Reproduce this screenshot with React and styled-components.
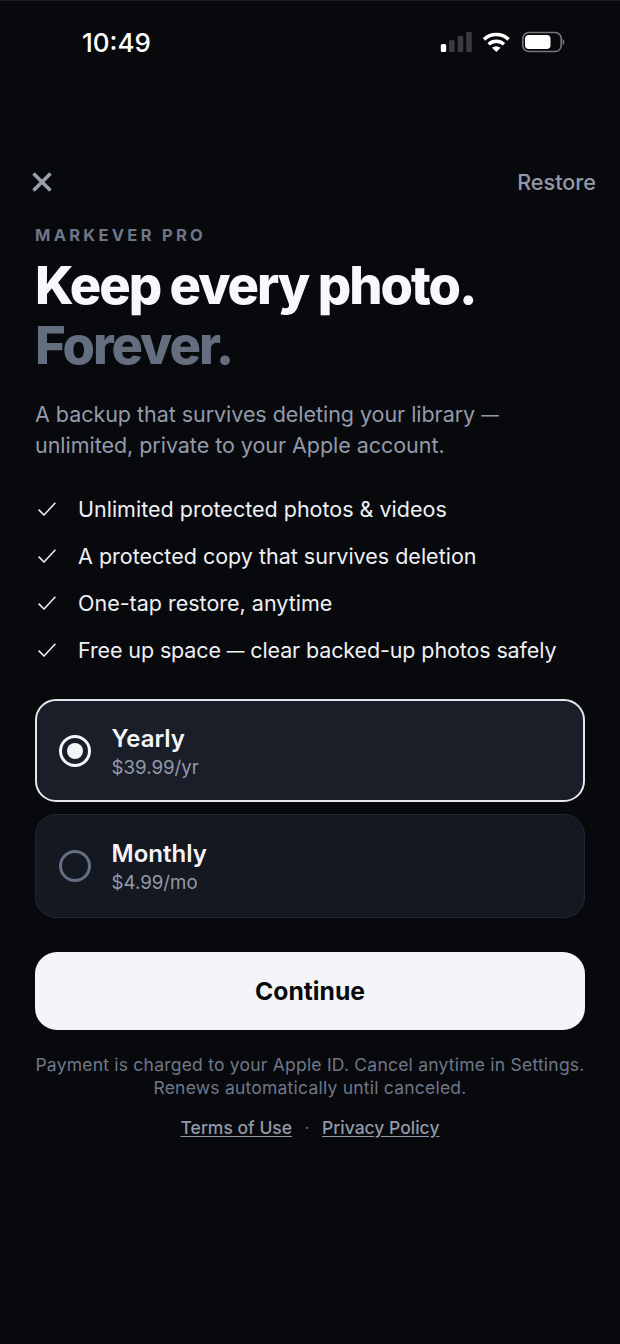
import React from "react";
import styled, { createGlobalStyle } from "styled-components";

const Global = createGlobalStyle`
  html, body { margin: 0; padding: 0; background: #08090d; }
  * { box-sizing: border-box; }
`;

const Page = styled.div`
  width: 620px;
  height: 1344px;
  overflow: hidden;
  background: #08090d;
  border-top: 1px solid #1a1c22;
  font-family: Inter, "Liberation Sans", sans-serif;
  color: #f4f5f9;
  display: flex;
  flex-direction: column;
`;

const StatusBar = styled.div`
  height: 81px;
  padding: 25px 54px 0 82px;
  display: flex;
  justify-content: space-between;
  align-items: flex-start;
`;

const Time = styled.div`
  font-size: 26px;
  line-height: 34px;
  font-weight: 500;
  color: #fff;
`;

const StatusIcons = styled.svg`
  margin-top: 3px;
  display: block;
`;

const TopBar = styled.div`
  margin-top: 78px;
  height: 44px;
  padding: 0 24px 0 31px;
  display: flex;
  justify-content: space-between;
  align-items: center;
`;

const CloseIcon = styled.svg`
  display: block;
`;

const Restore = styled.div`
  font-size: 21.6px;
  font-weight: 500;
  color: #929aa9;
`;

const Content = styled.div`
  padding: 0 35px;
  display: flex;
  flex-direction: column;
`;

const Eyebrow = styled.div`
  margin-top: 20px;
  font-size: 16.5px;
  line-height: 22px;
  font-weight: 700;
  letter-spacing: 3.27px;
  color: #6f7787;
`;

const Heading = styled.h1`
  margin: 9px 0 0;
  font-size: 52.5px;
  line-height: 60px;
  font-weight: 800;
  letter-spacing: -2.03px;
  color: ${(p) => (p.$muted ? "#656e7f" : "#f7f8fb")};
  &:last-of-type { margin-top: 0; }
`;

const Lead = styled.p`
  margin: 24px 0 0;
  font-size: 21.5px;
  line-height: 31px;
  letter-spacing: -0.04px;
  color: #939aaa;
`;

const Dash = styled.span`
  font-size: 0.82em;
  vertical-align: 0.06em;
`;

const Features = styled.ul`
  list-style: none;
  margin: 33px 0 0;
  padding: 0;
  display: flex;
  flex-direction: column;
  gap: 17px;
`;

const Feature = styled.li`
  height: 30px;
  display: flex;
  align-items: center;
  gap: 22px;
  font-size: 21.5px;
  color: #eef0f4;
`;

const FeatureText = styled.span`
  white-space: nowrap;
  letter-spacing: ${(p) => (p.$tight ? "-0.12px" : "0")};
`;

const Check = styled.svg`
  flex: none;
  display: block;
  margin-left: 3px;
`;

const Plans = styled.div`
  margin-top: 34px;
  display: flex;
  flex-direction: column;
  gap: 12px;
`;

const Plan = styled.div`
  height: ${(p) => (p.$selected ? 103 : 104)}px;
  padding: 0 ${(p) => (p.$selected ? 22 : 23)}px;
  display: flex;
  align-items: center;
  gap: 20.5px;
  border-radius: 21px;
  background: ${(p) => (p.$selected ? "#191e29" : "#141821")};
  border: ${(p) => (p.$selected ? "2px solid #e4e6eb" : "1px solid #222733")};
`;

const Radio = styled.div`
  width: 32px;
  height: 32px;
  border-radius: 50%;
  flex: none;
  display: flex;
  align-items: center;
  justify-content: center;
  border: 3px solid ${(p) => (p.$selected ? "#f4f5f9" : "#667085")};
  &::after {
    content: "";
    display: ${(p) => (p.$selected ? "block" : "none")};
    width: 16px;
    height: 16px;
    border-radius: 50%;
    background: #f4f5f9;
  }
`;

const PlanText = styled.div`
  display: flex;
  flex-direction: column;
  gap: 1px;
  padding-top: 2px;
`;

const PlanName = styled.div`
  font-size: 24px;
  line-height: 31px;
  font-weight: 600;
  color: #f4f5f9;
`;

const PlanPrice = styled.div`
  font-size: 18.7px;
  line-height: 26px;
  color: #929aa9;
`;

const ContinueButton = styled.button`
  margin-top: 34px;
  height: 78px;
  width: 100%;
  border: 0;
  border-radius: 22px;
  background: #f4f5f9;
  color: #08090d;
  font-family: inherit;
  font-size: 24.7px;
  font-weight: 700;
`;

const Legal = styled.p`
  margin: 23px 0 0;
  font-size: 17.5px;
  line-height: 23px;
  letter-spacing: 0.22px;
  text-align: center;
  color: #6f7888;
  white-space: nowrap;
`;

const Links = styled.div`
  margin-top: 17px;
  display: flex;
  justify-content: center;
  align-items: center;
  gap: 12.5px;
  font-size: 17.5px;
  line-height: 24px;
  color: #667085;
`;

const LegalLink = styled.a`
  color: #929aa9;
  font-weight: 500;
  text-decoration: underline;
  text-underline-offset: 2px;
`;

const features = [
  { id: "a", text: "Unlimited protected photos & videos" },
  { id: "b", text: "A protected copy that survives deletion" },
  { id: "c", text: "One-tap restore, anytime" },
  { id: "d", before: "Free up space ", after: " clear backed-up photos safely", tight: true },
];

const plans = [
  { name: "Yearly", price: "$39.99/yr", selected: true },
  { name: "Monthly", price: "$4.99/mo", selected: false },
];

export default function App() {
  return (
    <Page>
      <Global />
      <StatusBar>
        <Time>10:49</Time>
        <StatusIcons width="126" height="24" viewBox="0 0 126 24" fill="none">
          <rect x="0.8" y="15" width="5.4" height="8" rx="1.5" fill="#fff" />
          <rect x="9" y="11" width="5.6" height="12" rx="1.5" fill="#3a3b3f" />
          <rect x="17.7" y="6.7" width="5.6" height="16.3" rx="1.5" fill="#3a3b3f" />
          <rect x="26.2" y="2.7" width="5.6" height="20.3" rx="1.5" fill="#3a3b3f" />
          <path d="M44 10.4 A18 18 0 0 1 68.6 10.4" stroke="#fff" strokeWidth="3.5" />
          <path d="M48.6 15.2 A11.5 11.5 0 0 1 64 15.2" stroke="#fff" strokeWidth="3.5" />
          <path d="M52 18.8 L56.3 23 L60.6 18.8 A6.5 6.5 0 0 0 52 18.8 Z" fill="#fff" />
          <rect x="82.8" y="3.5" width="38.4" height="19" rx="6" stroke="#77787c" strokeWidth="1.6" />
          <rect x="85" y="6" width="25.5" height="14" rx="3.8" fill="#fff" />
          <path d="M122.6 10 C125 10.6 125 15.4 122.6 16 Z" fill="#77787c" />
        </StatusIcons>
      </StatusBar>
      <TopBar>
        <CloseIcon width="22" height="22" viewBox="0 0 22 22" fill="none">
          <path d="M2.5 2.5 L19.5 19.5 M19.5 2.5 L2.5 19.5" stroke="#989fad" strokeWidth="3.5" />
        </CloseIcon>
        <Restore>Restore</Restore>
      </TopBar>
      <Content>
        <Eyebrow>MARKEVER PRO</Eyebrow>
        <Heading>Keep every photo.</Heading>
        <Heading $muted>Forever.</Heading>
        <Lead>
          A backup that survives deleting your library <Dash>—</Dash>
          <br />
          unlimited, private to your Apple account.
        </Lead>
        <Features>
          {features.map((f) => (
            <Feature key={f.id}>
              <Check width="18" height="14" viewBox="0 0 18 14" fill="none">
                <path d="M0.6 7.6 L6 13 L17.4 0.7" stroke="#eef0f4" strokeWidth="1.5" />
              </Check>
              <FeatureText $tight={f.tight}>
                {f.text || (
                  <>
                    {f.before}
                    <Dash>—</Dash>
                    {f.after}
                  </>
                )}
              </FeatureText>
            </Feature>
          ))}
        </Features>
        <Plans>
          {plans.map((p) => (
            <Plan key={p.name} $selected={p.selected}>
              <Radio $selected={p.selected} />
              <PlanText>
                <PlanName>{p.name}</PlanName>
                <PlanPrice>{p.price}</PlanPrice>
              </PlanText>
            </Plan>
          ))}
        </Plans>
        <ContinueButton>Continue</ContinueButton>
        <Legal>
          Payment is charged to your Apple ID. Cancel anytime in Settings.
          <br />
          Renews automatically until canceled.
        </Legal>
        <Links>
          <LegalLink>Terms of Use</LegalLink>
          <span>·</span>
          <LegalLink>Privacy Policy</LegalLink>
        </Links>
      </Content>
    </Page>
  );
}
